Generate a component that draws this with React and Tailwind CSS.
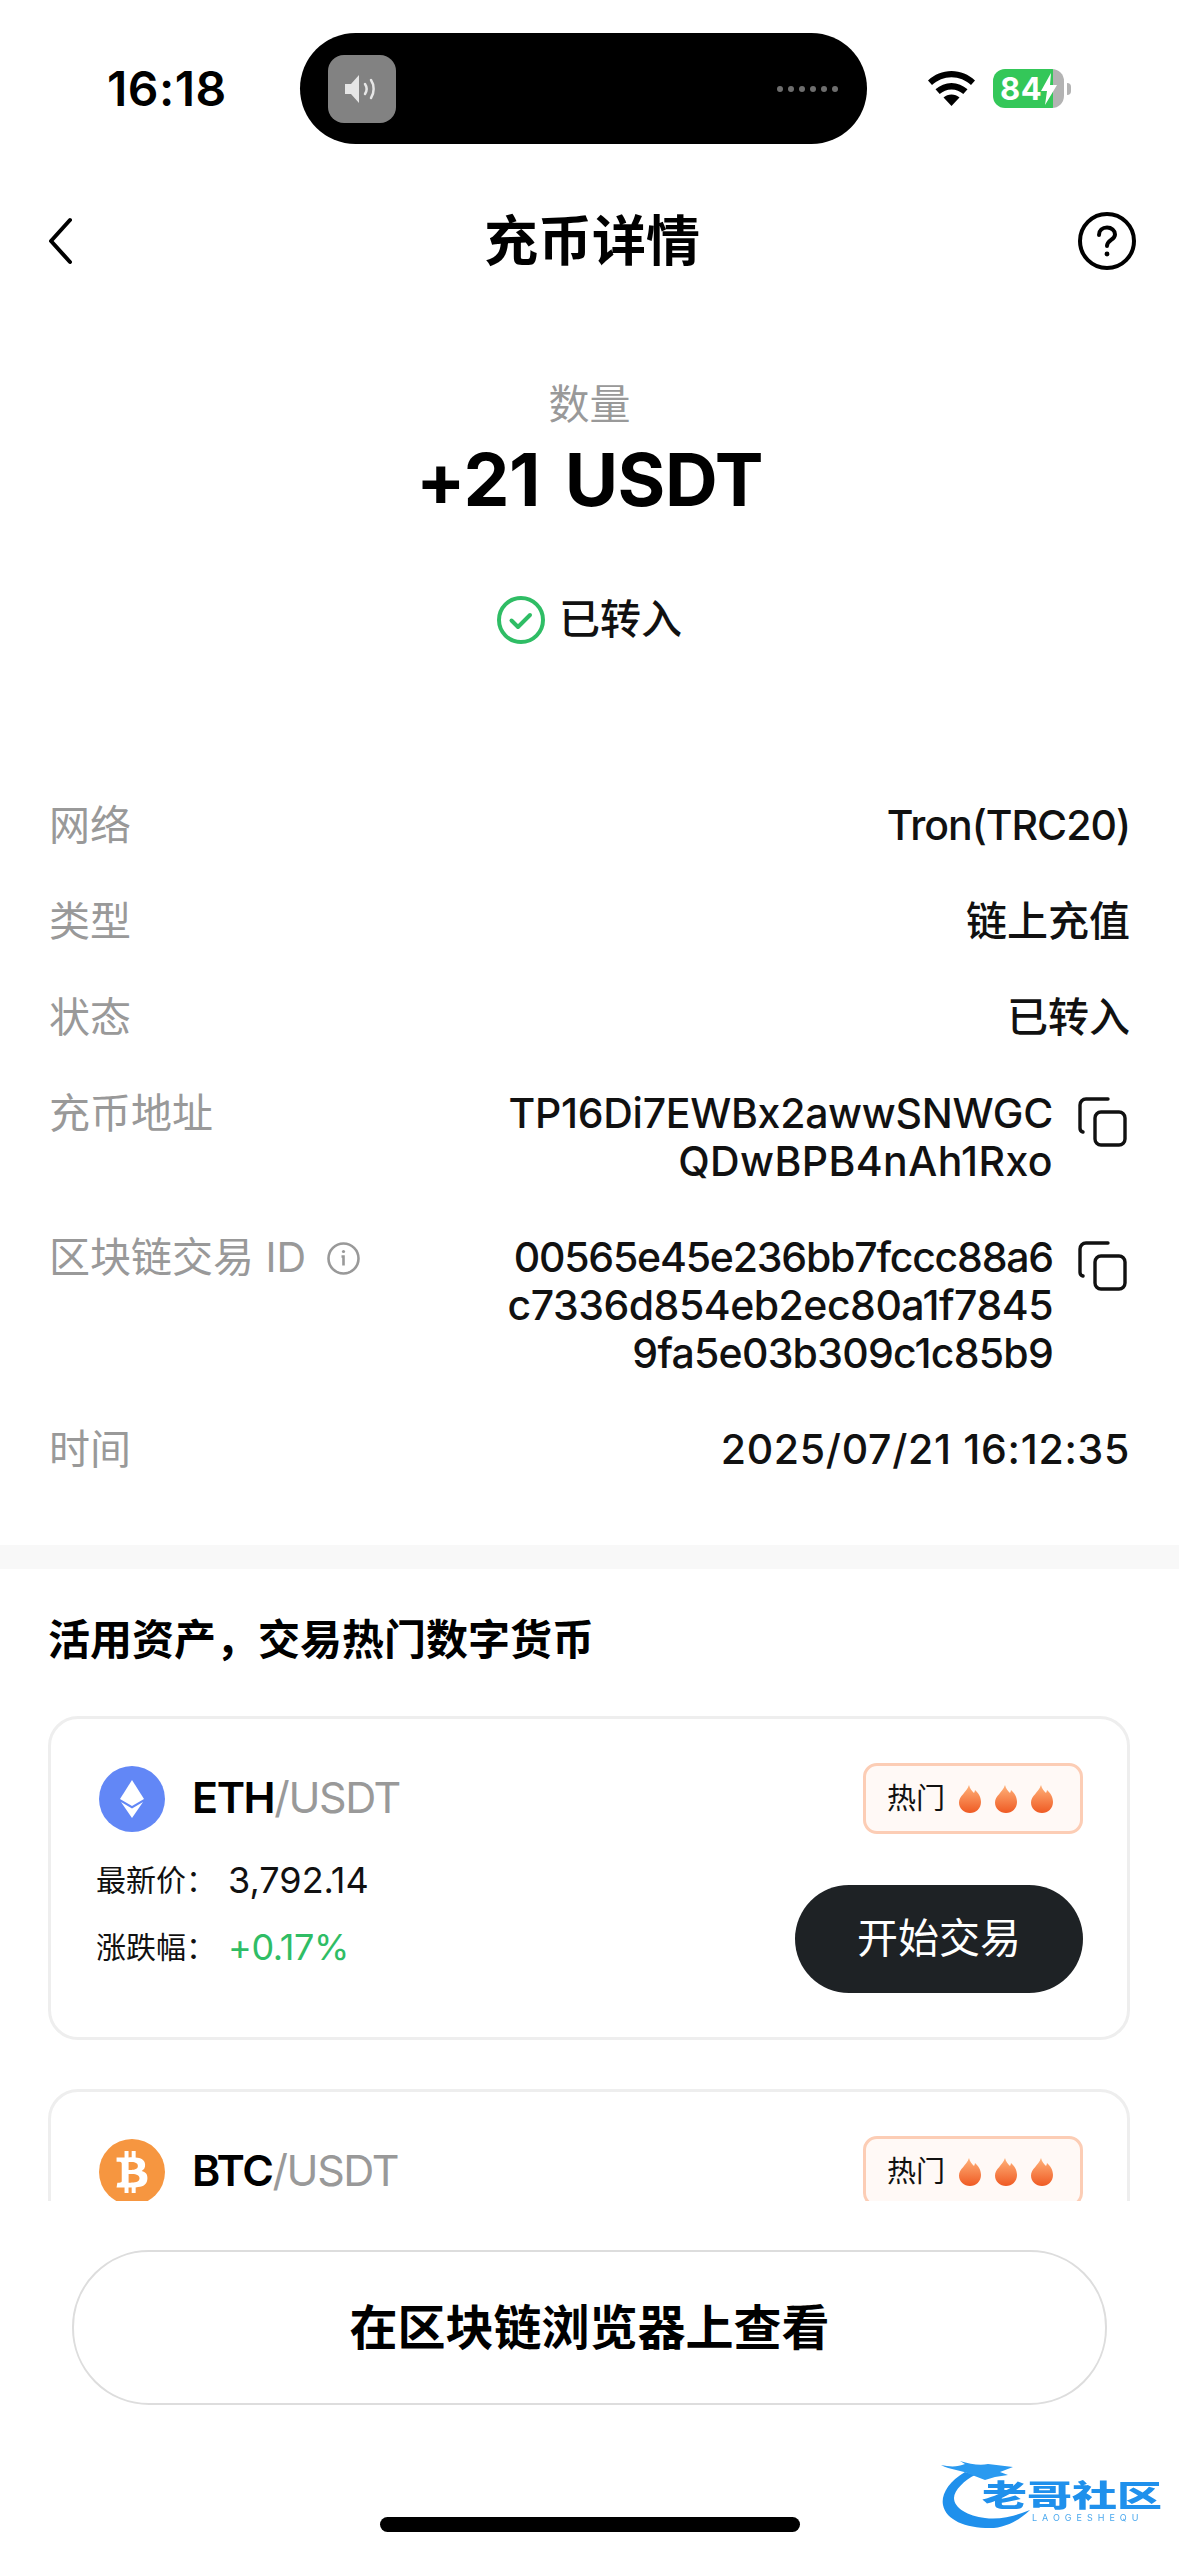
import React from 'react';
import { FaBtc } from 'react-icons/fa';

const rows = [
  { label: '网络', value: ['Tron(TRC20)'], fits: ['tracking-[-1px]'] },
  { label: '类型', value: ['链上充值'] },
  { label: '状态', value: ['已转入'] },
  { label: '充币地址', value: ['TP16Di7EWBx2awwSNWGC', 'QDwBPB4nAh1Rxo'], fits: ['tracking-[-0.3px]', 'tracking-[0.4px]'], copy: true },
  {
    label: '区块链交易 ID',
    value: ['00565e45e236bb7fccc88a6', 'c7336d854eb2ec80a1f7845', '9fa5e03b309c1c85b9'],
    fits: ['tracking-[-1.2px]', 'tracking-[-0.5px]', 'tracking-[-0.75px]'],
    copy: true,
    info: true,
  },
  { label: '时间', value: ['2025/07/21 16:12:35'], fits: ['tracking-[0.7px]'] },
];

const CopyIcon = () => (
  <svg className="w-[52px] h-[50px] shrink-0 mt-[8px]" viewBox="0 0 52 50" fill="none" stroke="#111" strokeWidth="3.4" strokeLinecap="round" strokeLinejoin="round">
    <path d="M30 2H8a6 6 0 0 0-6 6v23a4 4 0 0 0 3 4" />
    <rect x="17" y="15" width="30" height="33" rx="6" />
  </svg>
);

const InfoIcon = () => (
  <svg className="w-[33px] h-[33px] ml-[21px] mt-[2px]" viewBox="0 0 33 33" fill="none" stroke="#999">
    <circle cx="16.5" cy="16.5" r="15" strokeWidth="2.6" />
    <path d="M14.5 14.5h2v9" strokeWidth="2.6" />
    <circle cx="16.5" cy="9.5" r="1.6" fill="#999" stroke="none" />
  </svg>
);

const Flame = () => (
  <svg className="w-[22px] h-[28px]" viewBox="0 0 22 28">
    <defs>
      <linearGradient id="flameFill" x1="0" y1="0" x2="0" y2="1">
        <stop offset="0" stopColor="#ffb27a" />
        <stop offset="1" stopColor="#ef5a23" />
      </linearGradient>
    </defs>
    <path fill="url(#flameFill)" d="M10 0c1 4 3 6 5 8 .6-1 .9-1.800 1-3 3.500 3 6 7 6 12 0 6.500-5 11-11 11S0 23.500 0 17.500C0 11 7.500 7.500 10 0z" />
  </svg>
);

const EthLogo = () => (
  <div className="w-[66px] h-[66px] rounded-full bg-[#6287f6] flex items-center justify-center shrink-0">
    <svg className="w-[24px] h-[38px]" viewBox="0 0 24 38" fill="#fff">
      <path d="M12 0l12 19-12 7L0 19z" />
      <path d="M1 22l11 6.500L23 22 12 38z" />
    </svg>
  </div>
);

const BtcLogo = () => (
  <div className="w-[66px] h-[66px] rounded-full bg-[#f69640] flex items-center justify-center shrink-0">
    <FaBtc className="text-white w-[38px] h-[42px]" />
  </div>
);

const PairCard = ({ logo, base, price, change }) => (
  <div className="border-[3px] border-[#eeeeee] rounded-[30px] h-[324px] pl-[45px] pr-[44px] pt-[44px] flex justify-between shrink-0">
    <div className="flex flex-col">
      <div className="flex items-center h-[72px] pl-[3px] tracking-[-1.4px]">
        {logo}
        <span className="ml-[27px] -mt-[3px] text-[43px] font-semibold text-black">{base}</span>
        <span className="-mt-[3px] text-[43px] text-[#999]">/USDT</span>
      </div>
      {price && (
        <div className="flex items-center h-[48px] mt-[21px]">
          <span className="w-[132px] text-[30px] text-[#111]">最新价：</span>
          <span className="text-[36px] text-[#111]">{price}</span>
        </div>
      )}
      {change && (
        <div className="flex items-center h-[48px] mt-[19px]">
          <span className="w-[132px] text-[30px] text-[#111]">涨跌幅：</span>
          <span className="text-[36px] text-[#2fbd65] tracking-[-0.4px]">{change}</span>
        </div>
      )}
    </div>
    <div className="flex flex-col items-end">
      <div className="w-[220px] h-[71px] border-[3px] border-[#fccdb5] bg-[#fff9f6] rounded-[14px] flex items-center pl-[21px] gap-[14px]">
        <span className="text-[29px] text-[#111]">热门</span>
        <div className="flex gap-[14px]">
          <Flame />
          <Flame />
          <Flame />
        </div>
      </div>
      {price && (
        <button className="w-[288px] h-[108px] mt-[51px] rounded-full bg-[#1e2225] text-white text-[41px]">开始交易</button>
      )}
    </div>
  </div>
);

export default function App() {
  return (
    <div className="relative w-[1179px] h-[2556px] bg-white overflow-hidden text-black [font-family:Inter,'Noto_Sans_CJK_SC',sans-serif]">
      {/* status bar */}
      <div className="h-[177px] pt-[33px] flex items-start">
        <div className="w-[300px] h-[111px] flex items-center pl-[107px]">
          <span className="text-[48px] font-semibold tracking-[0.5px]">16:18</span>
        </div>
        <div className="w-[567px] h-[111px] rounded-[56px] bg-black flex items-center justify-between pl-[28px] pr-[29px]">
          <div className="w-[68px] h-[68px] rounded-[16px] bg-[#828282] flex items-center justify-center">
            <svg className="w-[36px] h-[30px]" viewBox="0 0 36 30" fill="none">
              <path d="M1 10h6L15 1v28l-8-9H1z" fill="#e6e6e6" />
              <path d="M21 10c2 3 2 7 0 10M27 6c3.500 5 3.500 13 0 18" stroke="#e6e6e6" strokeWidth="2.500" strokeLinecap="round" />
            </svg>
          </div>
          <div className="flex gap-[5px]">
            {[0, 1, 2, 3, 4, 5].map((i) => (
              <div key={i} className="w-[6px] h-[6px] rounded-full bg-[#6e6e6e]" />
            ))}
          </div>
        </div>
        <div className="flex items-center h-[111px] pl-[61px]">
          <svg className="w-[47px] h-[35px]" viewBox="0 0 47 35" fill="#000">
            <path d="M23.500 0C32.500 0 40.500 3.500 47 9.500l-4 4.500C37.500 9 31 6.200 23.500 6.200S9.500 9 4 14L0 9.500C6.500 3.500 14.500 0 23.500 0z" />
            <path d="M23.500 12c6 0 11.500 2.300 16 6.300l-4.200 4.700c-3.200-2.900-7.300-4.600-11.800-4.600s-8.600 1.700-11.800 4.600l-4.200-4.700C12 14.300 17.500 12 23.500 12z" />
            <path d="M23.500 23.500c3 0 5.800 1.100 8 3L23.500 35l-8-8.500c2.200-1.900 5-3 8-3z" />
          </svg>
          <div className="ml-[18px] w-[71px] h-[39px] rounded-[12px] bg-[linear-gradient(90deg,#34c759_84.500%,#b3b3b3_84.500%)] flex items-center pl-[7px] text-white text-[31px] font-bold leading-none tracking-[0.5px]">
            84
            <svg className="w-[16px] h-[32px] -ml-[1px]" viewBox="0 0 16 32" fill="#fff">
              <path d="M10 0L0 18h6L4 32 16 12H9z" />
            </svg>
          </div>
          <div className="ml-[3px] w-[4px] h-[12px] rounded-r-full bg-[#b3b3b3]" />
        </div>
      </div>

      {/* scrolling content, cut off above the fixed button */}
      <div className="h-[2024px] overflow-hidden">
        <div className="h-[128px] flex items-center justify-between pl-[48px] pr-[43px]">
          <div className="w-[58px]">
            <svg className="w-[24px] h-[48px]" viewBox="0 0 24 48" fill="none" stroke="#000" strokeWidth="4" strokeLinecap="round" strokeLinejoin="round">
              <path d="M22 3L3 24l19 21" />
            </svg>
          </div>
          <h1 className="text-[54px] font-semibold leading-none mt-[2px]">充币详情</h1>
          <svg className="w-[58px] h-[58px]" viewBox="0 0 58 58" fill="none" stroke="#000" strokeWidth="4" strokeLinecap="round">
            <circle cx="29" cy="29" r="27" />
            <path d="M21 23c0-4.500 3.500-7.500 8-7.500s8 3 8 7c0 5.500-8 5.500-8 11.500" />
            <circle cx="29" cy="42" r="2.400" fill="#000" stroke="none" />
          </svg>
        </div>

        <div className="mt-[75px] flex flex-col items-center">
          <div className="text-[41px] leading-[48px] text-[#999]">数量</div>
          <div className="mt-[12px] text-[73px] leading-[80px] font-bold tracking-[-0.5px] [word-spacing:8px]">+21 USDT</div>
          <div className="mt-[76px] h-[48px] flex items-center gap-[14px]">
            <svg className="w-[48px] h-[48px]" viewBox="0 0 48 48" fill="none" stroke="#2fbd65" strokeWidth="4" strokeLinecap="round" strokeLinejoin="round">
              <circle cx="24" cy="24" r="22" />
              <path d="M14.500 24.500l6.500 6.500 12-12" />
            </svg>
            <span className="text-[41px] font-medium text-[#111]">已转入</span>
          </div>
        </div>

        <div className="mt-[157px] pl-[49px] pr-[49px] flex flex-col gap-[48px]">
          {rows.map((row) => (
            <div key={row.label} className="flex justify-between text-[41px] leading-[48px]">
              <div className="flex items-center h-[48px] text-[#999]">
                {row.label}
                {row.info && <InfoIcon />}
              </div>
              <div className="flex gap-[25px]">
                <div className="text-right font-medium text-[#111]">
                  {row.value.map((line, i) => (
                    <div key={line} className={row.fits ? row.fits[i] : ''}>{line}</div>
                  ))}
                </div>
                {row.copy && <CopyIcon />}
              </div>
            </div>
          ))}
        </div>

        <div className="mt-[72px] h-[24px] bg-[#f8f8f8]" />

        <div className="pl-[48px] pr-[49px]">
          <h2 className="mt-[47px] text-[42px] leading-[48px] font-semibold">活用资产，交易热门数字货币</h2>
          <div className="mt-[52px] flex flex-col gap-[49px]">
            <PairCard logo={<EthLogo />} base="ETH" price="3,792.14" change="+0.17%" />
            <PairCard logo={<BtcLogo />} base="BTC" />
          </div>
        </div>
      </div>

      {/* fixed bottom button */}
      <div className="px-[72px] pt-[49px]">
        <button className="w-full h-[155px] rounded-[77px] border-2 border-[#dddddd] bg-white text-[48px] font-semibold">在区块链浏览器上查看</button>
      </div>
      <div className="mt-[112px] mx-auto w-[420px] h-[15px] rounded-full bg-black" />

      {/* watermark sits over the page corner */}
      <div className="absolute left-[880px] top-[2420px] w-[299px] h-[136px] blur-[0.6px]">
        <svg className="absolute left-0 top-0 w-[299px] h-[136px]" viewBox="0 0 299 136">
          <path d="M85 52C68 62 61 75 63 85c3 15 22 23 47 23 15 0 30-8 40-18-15 6-30 10-45 8-17-2-31-10-31-20 0-8 11-18 21-23z" fill="#1f90ec" />
          <path d="M61 45c9 2 17 2 24-1l-5-3c10 3 20 5 28 3l25 3-13 5 8 3-13 2-10 3-13-5C82 50 70 50 61 45z" fill="#2a9af0" />
        </svg>
        <div className="absolute left-[102px] top-[62px] h-[28px] text-[45px] leading-[28px] font-black whitespace-nowrap text-[#1f90ec] scale-y-[0.65]">老哥社区</div>
        <div className="absolute left-[152px] top-[93px] text-[9px] leading-[10px] tracking-[5px] whitespace-nowrap text-[#4aa8ee]">LAOGESHEQU</div>
      </div>
    </div>
  );
}
